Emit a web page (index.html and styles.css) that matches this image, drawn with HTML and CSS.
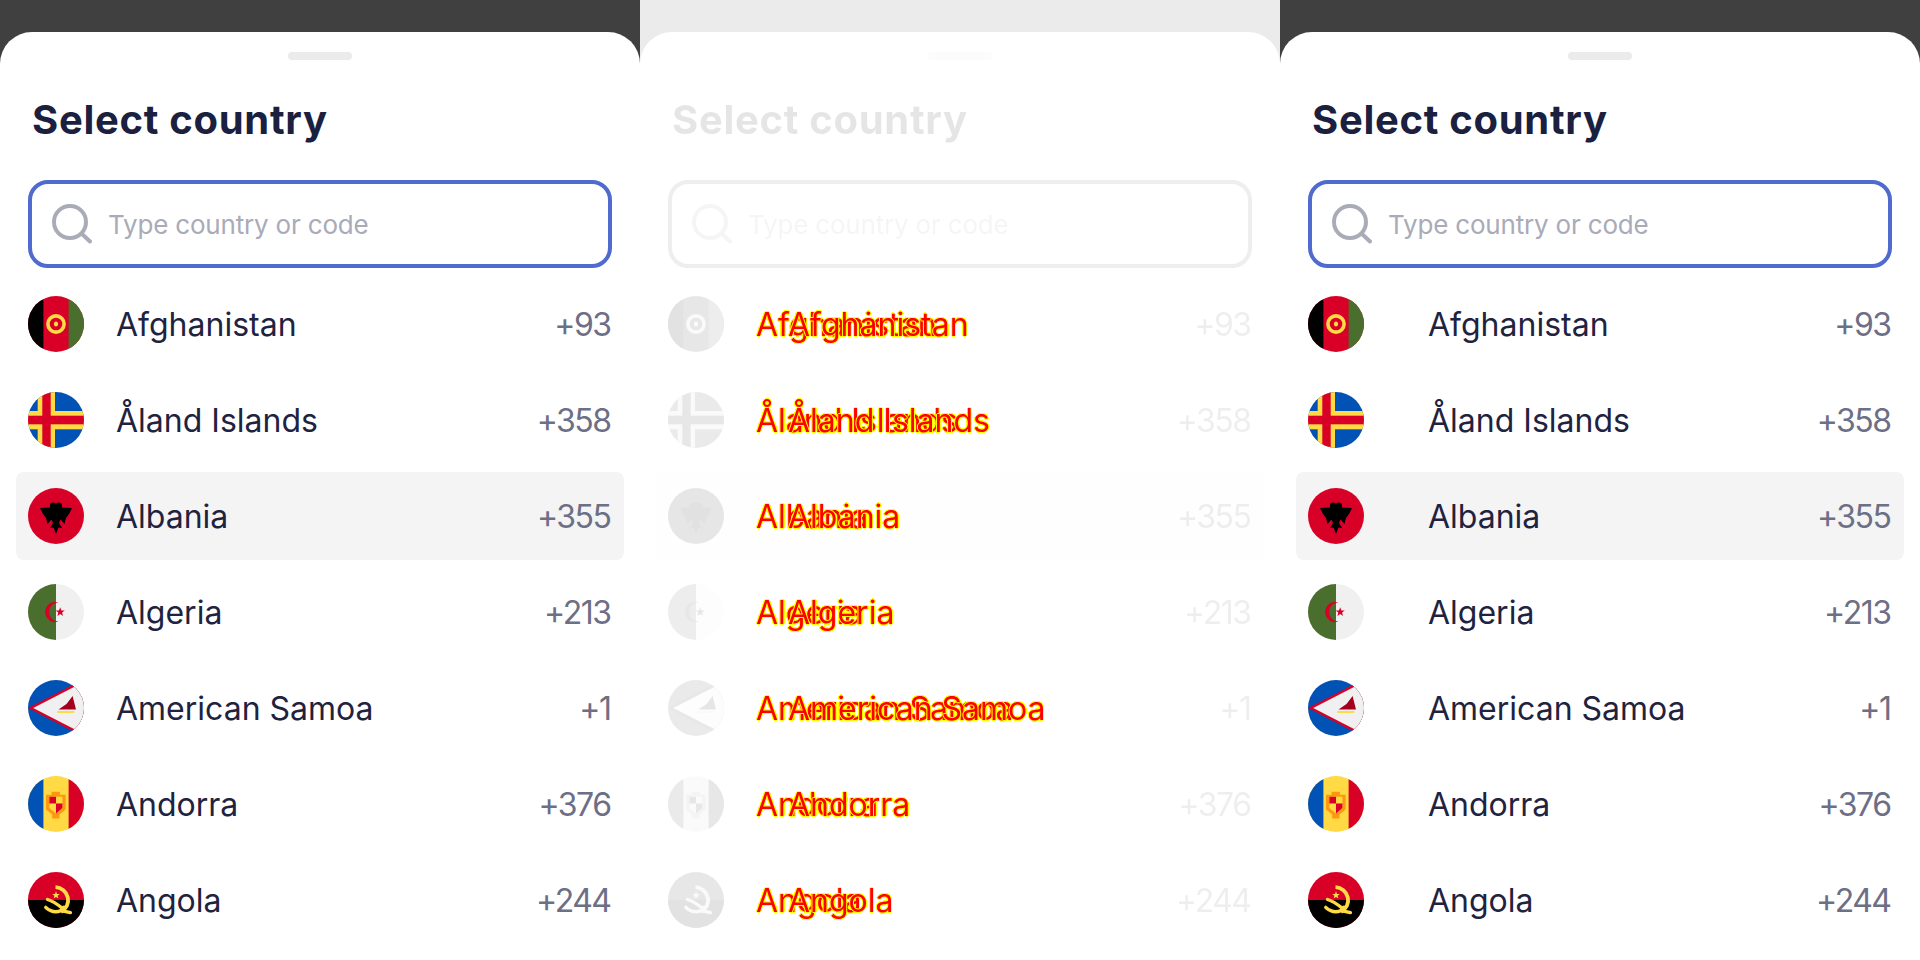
FILE: index.html
```html
<!DOCTYPE html>
<html lang="en">
<head>
<meta charset="utf-8">
<title>Select country</title>
<link rel="stylesheet" href="styles.css">
</head>
<body>
<svg class="defs" width="0" height="0" aria-hidden="true">
  <defs>
    <filter id="hard" x="-5%" y="-20%" width="110%" height="140%" color-interpolation-filters="sRGB">
      <feComponentTransfer><feFuncA type="discrete" tableValues="0 1 1 1"/></feComponentTransfer>
    </filter>
    <clipPath id="disc"><circle cx="28" cy="28" r="28"/></clipPath>
    <symbol id="f-af" viewBox="0 0 56 56"><g clip-path="url(#disc)">
      <rect width="56" height="56" fill="#d80027"/>
      <rect width="15.4" height="56" fill="#000"/>
      <rect x="40.6" width="15.4" height="56" fill="#496e2d"/>
      <circle cx="28" cy="28" r="8.1" fill="none" stroke="#ffda44" stroke-width="3.6"/>
      <rect x="26" y="25.5" width="4" height="5" rx="2" fill="#ffda44"/>
    </g></symbol>
    <symbol id="f-ax" viewBox="0 0 56 56"><g clip-path="url(#disc)">
      <rect width="56" height="56" fill="#0052b4"/>
      <rect x="9.7" width="17.3" height="56" fill="#ffda44"/>
      <rect y="19" width="56" height="18.3" fill="#ffda44"/>
      <rect x="14.3" width="8.4" height="56" fill="#d80027"/>
      <rect y="23.7" width="56" height="8.6" fill="#d80027"/>
    </g></symbol>
    <symbol id="f-al" viewBox="0 0 56 56"><g clip-path="url(#disc)">
      <rect width="56" height="56" fill="#d80027"/>
      <path d="M12 20 L22 19.5 L22 16 Q25 13.5 28 15.5 Q31 13.5 34 16 L34 19.5 L44 20 L41 26 L38 30 L36.5 36 L32.5 31.5 L31 35 L34 40 L30.5 39.5 L28 46 L25.5 39.5 L22 40 L25 35 L23.5 31.5 L19.5 36 L18 30 L15 26 Z" fill="#000"/>
    </g></symbol>
    <symbol id="f-dz" viewBox="0 0 56 56"><g clip-path="url(#disc)">
      <rect width="56" height="56" fill="#f0f0f0"/>
      <rect width="28" height="56" fill="#496e2d"/>
      <path d="M30.5 18.6 A10 10 0 1 0 30.5 37.4 A8 8 0 1 1 30.5 18.6 Z" fill="#d80027"/>
      <path d="M32.2 23.2 L33.4 26.4 L36.8 26.5 L34.1 28.6 L35 31.9 L32.2 30 L29.4 31.9 L30.3 28.6 L27.6 26.5 L31 26.4 Z" fill="#d80027"/>
    </g></symbol>
    <symbol id="f-as" viewBox="0 0 56 56"><g clip-path="url(#disc)">
      <rect width="56" height="56" fill="#0052b4"/>
      <path d="M0 28 L46 4.3 H56 V51.7 H46 Z" fill="#d80027"/>
      <path d="M5.2 28 L46 7 H56 V49 H46 Z" fill="#f0f0f0"/>
      <path d="M44.6 16 L48 29.6 H30.5 L38.5 24 Z" fill="#a2001d"/>
      <rect x="29.2" y="31" width="17" height="2" fill="#ffda44"/>
    </g></symbol>
    <symbol id="f-ad" viewBox="0 0 56 56"><g clip-path="url(#disc)">
      <rect width="56" height="56" fill="#ffda44"/>
      <rect width="15.4" height="56" fill="#0052b4"/>
      <rect x="40.6" width="15.4" height="56" fill="#d80027"/>
      <path d="M18 18.8 H23.6 V15.8 H32 V18.8 H37.6 V33.5 L31.5 38.5 V42.4 H24.2 V38.5 L18 33.5 Z" fill="#ff9811"/>
      <path d="M21.4 20.8 H34.4 V32 L28 37.6 L21.4 32 Z" fill="#ffda44"/>
      <path d="M21.4 20.8 H28 V27.5 H21.4 Z M28 27.5 H34.4 V32 L28 37.6 Z" fill="#d80027"/>
    </g></symbol>
    <symbol id="f-ao" viewBox="0 0 56 56"><g clip-path="url(#disc)">
      <rect width="56" height="56" fill="#d80027"/>
      <rect y="28" width="56" height="28" fill="#000"/>
      <path d="M27.5 15.2 A13 13 0 0 1 33 39.8" fill="none" stroke="#ffda44" stroke-width="3.8"/>
      <path d="M19.5 27.5 Q26 29.5 34.5 36.4 L36 35.2 M17.8 35.4 Q25 41.8 33 38.6 L42.4 40.6" fill="none" stroke="#ffda44" stroke-width="3.4" stroke-linecap="round"/>
      <path d="M28 19.2 L29 22 L31.9 22 L29.6 23.8 L30.4 26.6 L28 25 L25.6 26.6 L26.4 23.8 L24.1 22 L27 22 Z" fill="#ffda44"/>
    </g></symbol>
    <symbol id="i-search" viewBox="0 0 40 40">
      <circle cx="18" cy="18" r="16" fill="none" stroke="currentColor" stroke-width="4"/>
      <path d="M30 30 L38 37.5" fill="none" stroke="currentColor" stroke-width="4" stroke-linecap="round"/>
    </symbol>
  </defs>
</svg>

<main class="page">

  <section class="panel">
    <div class="sheet">
      <div class="handle"></div>
      <h1 class="title">Select country</h1>
      <div class="search">
        <svg class="search-icon"><use href="#i-search"/></svg>
        <span class="placeholder">Type country or code</span>
      </div>
      <ul class="list">
        <li class="row"><svg class="flag"><use href="#f-af"/></svg><span class="name">Afghanistan</span><span class="code">+93</span></li>
        <li class="row"><svg class="flag"><use href="#f-ax"/></svg><span class="name">Åland Islands</span><span class="code">+358</span></li>
        <li class="row active"><svg class="flag"><use href="#f-al"/></svg><span class="name">Albania</span><span class="code">+355</span></li>
        <li class="row"><svg class="flag"><use href="#f-dz"/></svg><span class="name">Algeria</span><span class="code">+213</span></li>
        <li class="row"><svg class="flag"><use href="#f-as"/></svg><span class="name">American Samoa</span><span class="code">+1</span></li>
        <li class="row"><svg class="flag"><use href="#f-ad"/></svg><span class="name">Andorra</span><span class="code">+376</span></li>
        <li class="row"><svg class="flag"><use href="#f-ao"/></svg><span class="name">Angola</span><span class="code">+244</span></li>
      </ul>
    </div>
  </section>

  <section class="panel ghost">
    <div class="sheet">
      <div class="handle"></div>
      <h1 class="title">Select country</h1>
      <div class="search">
        <svg class="search-icon"><use href="#i-search"/></svg>
        <span class="placeholder">Type country or code</span>
      </div>
      <ul class="list">
        <li class="row"><svg class="flag"><use href="#f-af"/></svg><span class="name diff">Afghanistan<span class="shifted">Afghanistan</span></span><span class="code">+93</span></li>
        <li class="row"><svg class="flag"><use href="#f-ax"/></svg><span class="name diff">Åland Islands<span class="shifted">Åland Islands</span></span><span class="code">+358</span></li>
        <li class="row active"><svg class="flag"><use href="#f-al"/></svg><span class="name diff">Albania<span class="shifted">Albania</span></span><span class="code">+355</span></li>
        <li class="row"><svg class="flag"><use href="#f-dz"/></svg><span class="name diff">Algeria<span class="shifted">Algeria</span></span><span class="code">+213</span></li>
        <li class="row"><svg class="flag"><use href="#f-as"/></svg><span class="name diff">American Samoa<span class="shifted">American Samoa</span></span><span class="code">+1</span></li>
        <li class="row"><svg class="flag"><use href="#f-ad"/></svg><span class="name diff">Andorra<span class="shifted">Andorra</span></span><span class="code">+376</span></li>
        <li class="row"><svg class="flag"><use href="#f-ao"/></svg><span class="name diff">Angola<span class="shifted">Angola</span></span><span class="code">+244</span></li>
      </ul>
    </div>
  </section>

  <section class="panel wide-gap">
    <div class="sheet">
      <div class="handle"></div>
      <h1 class="title">Select country</h1>
      <div class="search">
        <svg class="search-icon"><use href="#i-search"/></svg>
        <span class="placeholder">Type country or code</span>
      </div>
      <ul class="list">
        <li class="row"><svg class="flag"><use href="#f-af"/></svg><span class="name">Afghanistan</span><span class="code">+93</span></li>
        <li class="row"><svg class="flag"><use href="#f-ax"/></svg><span class="name">Åland Islands</span><span class="code">+358</span></li>
        <li class="row active"><svg class="flag"><use href="#f-al"/></svg><span class="name">Albania</span><span class="code">+355</span></li>
        <li class="row"><svg class="flag"><use href="#f-dz"/></svg><span class="name">Algeria</span><span class="code">+213</span></li>
        <li class="row"><svg class="flag"><use href="#f-as"/></svg><span class="name">American Samoa</span><span class="code">+1</span></li>
        <li class="row"><svg class="flag"><use href="#f-ad"/></svg><span class="name">Andorra</span><span class="code">+376</span></li>
        <li class="row"><svg class="flag"><use href="#f-ao"/></svg><span class="name">Angola</span><span class="code">+244</span></li>
      </ul>
    </div>
  </section>

</main>
</body>
</html>
```
FILE: styles.css
```css
* { box-sizing: border-box; }

html, body {
  margin: 0;
  height: 960px;
  overflow: hidden;
  background: #fff;
}

body {
  font-family: "Inter", "Noto Sans", sans-serif;
  color: #1f2340;
}

.defs { position: absolute; }

.page {
  display: grid;
  grid-template-columns: repeat(3, 640px);
  height: 960px;
}

.panel {
  background: #404040;
  padding-top: 32px;
  height: 960px;
}

.sheet {
  background: #fff;
  border-radius: 32px 32px 0 0;
  height: 928px;
  padding-top: 20px;
  display: flex;
  flex-direction: column;
}

.handle {
  width: 64px;
  height: 8px;
  border-radius: 4px;
  background: #ebebeb;
  align-self: center;
}

.title {
  margin: 28px 0 0 32px;
  height: 64px;
  font-size: 40px;
  line-height: 64px;
  font-weight: 700;
  letter-spacing: 0.7px;
  color: #1b1f40;
}

.search {
  margin: 28px 28px 0;
  height: 88px;
  border: 4px solid #4f6bd0;
  border-radius: 20px;
  padding: 0 20px;
  display: flex;
  align-items: center;
  gap: 16px;
}

.search-icon {
  width: 40px;
  height: 40px;
  flex: none;
  color: #a9abb8;
}

.placeholder {
  font-size: 26px;
  letter-spacing: -0.18px;
  color: #a9abb8;
}

.list {
  list-style: none;
  margin: 12px 0 0;
  padding: 0 16px;
  display: flex;
  flex-direction: column;
  gap: 8px;
}

.row {
  height: 88px;
  padding: 0 12px;
  border-radius: 8px;
  display: flex;
  align-items: center;
  gap: 32px;
}

.wide-gap .row { gap: 64px; }

.row.active { background: #f4f4f5; }

.flag {
  width: 56px;
  height: 56px;
  flex: none;
}

.name {
  flex: 1;
  font-size: 32px;
  color: #1f2340;
}

.code {
  padding-right: 1.5px;
  font-size: 32px;
  letter-spacing: -1.5px;
  color: #6c6f85;
}

/* Middle panel: faded difference between the outer two */
.ghost { background: #ebebeb; }

.ghost .handle,
.ghost .title,
.ghost .search,
.ghost .flag,
.ghost .code {
  opacity: 0.11;
  filter: grayscale(1);
}

.ghost .row.active { background: #fefefe; }

.diff {
  position: relative;
  color: #f00;
  text-shadow: 1px 0 #ff0, -1px 0 #ff0, 0 1px #ff0, 0 -1px #ff0;
  filter: url(#hard);
}

.shifted {
  position: absolute;
  left: 32px;
  top: 0;
  white-space: nowrap;
}
```
